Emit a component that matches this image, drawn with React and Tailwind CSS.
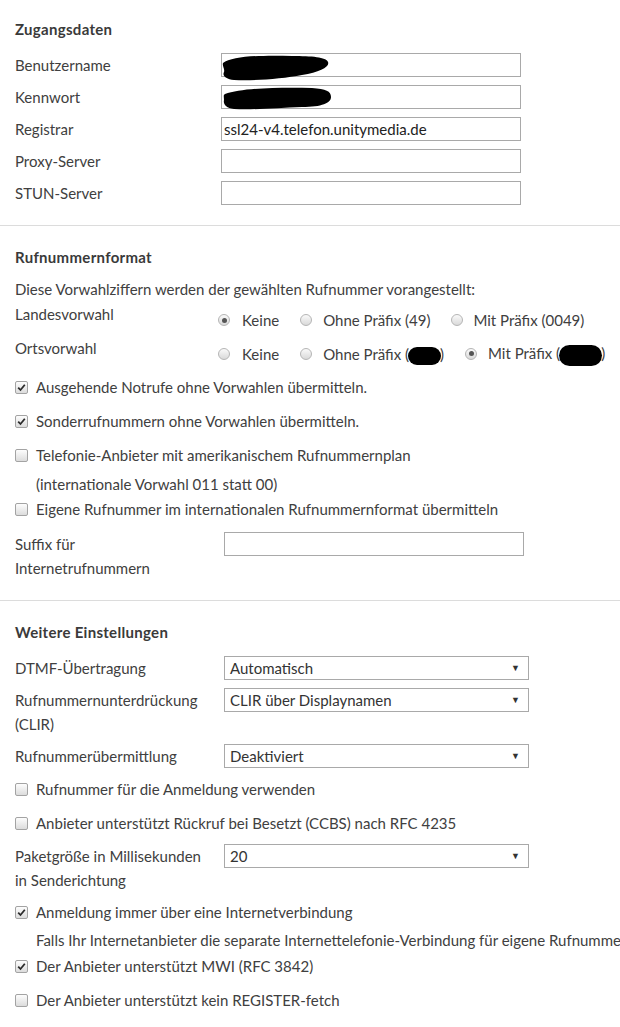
const Checkbox = ({ checked }) => (
    <span className="w-[13px] h-[13px] shrink-0 rounded-[2px] border border-[#a3a3a3] bg-gradient-to-b from-[#fdfdfd] to-[#dcdcdc] flex items-center justify-center">
        {checked && (
            <svg width="9" height="9" viewBox="0 0 9 9">
                <path d="M1.2 4.6 L3.5 7 L7.8 1.8" stroke="#2b2b2b" strokeWidth="1.8" fill="none" />
            </svg>
        )}
    </span>
);

const Radio = ({ checked }) => (
    <span className="w-[12px] h-[12px] shrink-0 rounded-full border border-[#b5b5b5] bg-gradient-to-b from-[#fafafa] to-[#d9d9d9] flex items-center justify-center">
        {checked && <span className="w-[5px] h-[5px] rounded-full bg-[#555]"></span>}
    </span>
);

const Blot = ({ className }) => (
    <span className={"inline-block align-middle bg-black rounded-full " + className}></span>
);

const Scribble = ({ d }) => (
    <svg className="absolute left-0 top-0 pointer-events-none" width="112" height="28" viewBox="0 0 112 28">
        <path d={d} fill="#000" />
    </svg>
);

const Input = ({ value, width = "w-[300px]", children }) => (
    <div className={"relative shrink-0 h-[24px] border border-[#a9a9a9] bg-white pl-[2px] leading-[22px] text-[#222] " + width}>
        {value}
        {children}
    </div>
);

const Select = ({ value }) => (
    <div className="w-[305px] shrink-0 h-[24px] border border-[#a9a9a9] bg-white pl-[5px] pr-[8px] flex items-center justify-between text-[#333]">
        <span>{value}</span>
        <span className="text-[9px] text-[#333]">▼</span>
    </div>
);

const FieldRow = ({ label, labelW = "w-[206px]", children }) => (
    <div className="flex items-start py-[4px]">
        <div className={"shrink-0 leading-[24px] " + labelW}>{label}</div>
        {children}
    </div>
);

const CheckRow = ({ checked, children, h = "h-[34px]" }) => (
    <div className={"flex items-center gap-[8px] " + h}>
        <Checkbox checked={checked} />
        <span>{children}</span>
    </div>
);

const RadioItem = ({ checked, children, gap = "gap-[11px]" }) => (
    <span className={"flex items-center " + gap}>
        <Radio checked={checked} />
        <span>{children}</span>
    </span>
);

const Heading = ({ children }) => (
    <h2 className="h-[24px] leading-[24px] text-[15px] font-bold tracking-[0.3px] text-[#3a3a3a]">{children}</h2>
);

export default function App() {
    return (
        <div className="w-[620px] h-[1027px] overflow-hidden bg-white text-[15px] text-[#404040] whitespace-nowrap" style={{ fontFamily: "Lato, 'Open Sans', sans-serif" }}>
            {/* Zugangsdaten */}
            <div className="px-[15px] pt-[17px] pb-[16px] border-b border-[#dcdcdc]">
                <Heading>Zugangsdaten</Heading>
                <div className="mt-[8px]">
                    <FieldRow label="Benutzername">
                        <Input>
                            <Scribble d="M1 9 C10 2 40 1 70 2 C90 2 104 3 106 8 C108 13 98 18 80 21 C60 25 30 27 12 26 C4 25 0 22 2 18 C3 15 0 12 1 9 Z" />
                        </Input>
                    </FieldRow>
                    <FieldRow label="Kennwort">
                        <Input>
                            <Scribble d="M3 8 C20 2 60 1 90 2 C104 3 109 5 109 11 C109 17 100 21 80 21 C55 22 30 24 12 23 C4 22 1 18 2 14 C2 11 1 9 3 8 Z" />
                        </Input>
                    </FieldRow>
                    <FieldRow label="Registrar">
                        <Input value="ssl24-v4.telefon.unitymedia.de" />
                    </FieldRow>
                    <FieldRow label="Proxy-Server">
                        <Input />
                    </FieldRow>
                    <FieldRow label="STUN-Server">
                        <Input />
                    </FieldRow>
                </div>
            </div>

            {/* Rufnummernformat */}
            <div className="px-[15px] pt-[19px] pb-[16px] border-b border-[#dcdcdc]">
                <Heading>Rufnummernformat</Heading>
                <div className="mt-[8px] leading-[24px]">Diese Vorwahlziffern werden der gewählten Rufnummer vorangestellt:</div>
                <div className="mt-[1px] flex items-start h-[34px]">
                    <div className="shrink-0 w-[203px] leading-[24px]">Landesvorwahl</div>
                    <div className="mt-[6px] h-[24px] flex items-center gap-[21px]">
                        <RadioItem checked gap="gap-[12px]">Keine</RadioItem>
                        <RadioItem>Ohne Präfix (49)</RadioItem>
                        <RadioItem gap="gap-[10px]">Mit Präfix (0049)</RadioItem>
                    </div>
                </div>
                <div className="flex items-start h-[34px]">
                    <div className="shrink-0 w-[203px] leading-[24px]">Ortsvorwahl</div>
                    <div className="mt-[6px] h-[24px] flex items-center gap-[21px]">
                        <RadioItem gap="gap-[12px]">Keine</RadioItem>
                        <RadioItem>Ohne Präfix (<Blot className="w-[33px] h-[18px] -mx-[1px]" />)</RadioItem>
                        <RadioItem checked>Mit Präfix (<Blot className="w-[43px] h-[21px] -mx-[1px]" />)</RadioItem>
                    </div>
                </div>
                <CheckRow checked>Ausgehende Notrufe ohne Vorwahlen übermitteln.</CheckRow>
                <CheckRow checked>Sonderrufnummern ohne Vorwahlen übermitteln.</CheckRow>
                <CheckRow>Telefonie-Anbieter mit amerikanischem Rufnummernplan</CheckRow>
                <div className="pl-[21px] leading-[24px]">(internationale Vorwahl 011 statt 00)</div>
                <CheckRow h="h-[26px]">Eigene Rufnummer im internationalen Rufnummernformat übermitteln</CheckRow>
                <div className="mt-[6px]">
                    <FieldRow label={<>Suffix für<br />Internetrufnummern</>} labelW="w-[209px]">
                        <Input width="w-[300px]" />
                    </FieldRow>
                </div>
            </div>

            {/* Weitere Einstellungen */}
            <div className="px-[15px] pt-[19px]">
                <Heading>Weitere Einstellungen</Heading>
                <div className="mt-[8px]">
                    <FieldRow label="DTMF-Übertragung" labelW="w-[209px]">
                        <Select value="Automatisch" />
                    </FieldRow>
                    <FieldRow label={<>Rufnummernunterdrückung<br />(CLIR)</>} labelW="w-[209px]">
                        <Select value="CLIR über Displaynamen" />
                    </FieldRow>
                    <FieldRow label="Rufnummerübermittlung" labelW="w-[209px]">
                        <Select value="Deaktiviert" />
                    </FieldRow>
                </div>
                <CheckRow>Rufnummer für die Anmeldung verwenden</CheckRow>
                <CheckRow>Anbieter unterstützt Rückruf bei Besetzt (CCBS) nach RFC 4235</CheckRow>
                <FieldRow label={<>Paketgröße in Millisekunden<br />in Senderichtung</>} labelW="w-[209px]">
                    <Select value="20" />
                </FieldRow>
                <CheckRow checked h="h-[32px]">Anmeldung immer über eine Internetverbindung</CheckRow>
                <div className="pl-[21px] leading-[24px]">Falls Ihr Internetanbieter die separate Internettelefonie-Verbindung für eigene Rufnummern nicht unterstützt</div>
                <CheckRow checked h="h-[28px]">Der Anbieter unterstützt MWI (RFC 3842)</CheckRow>
                <CheckRow h="h-[40px]">Der Anbieter unterstützt kein REGISTER-fetch</CheckRow>
            </div>
        </div>
    );
}
